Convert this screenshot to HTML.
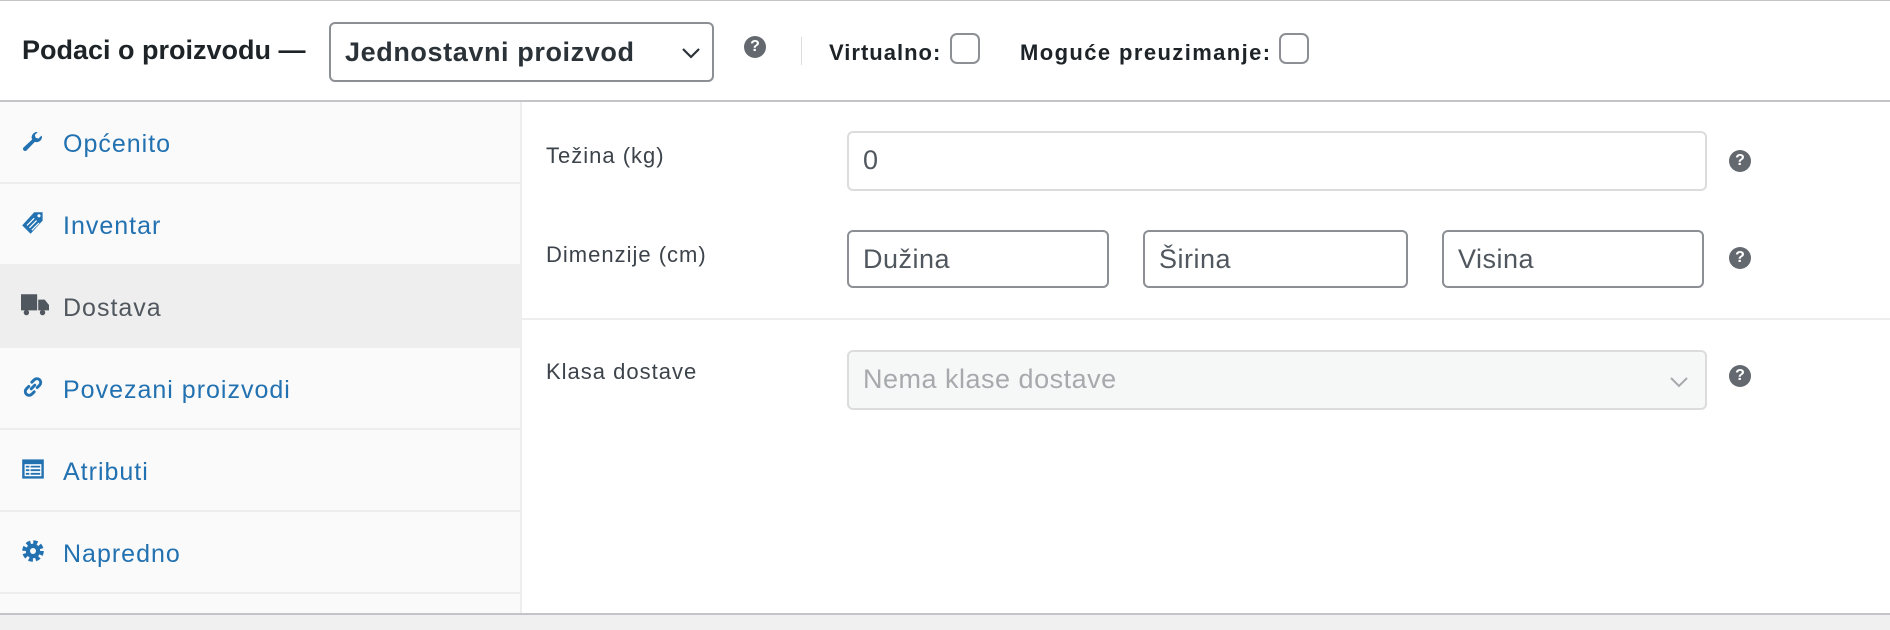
<!DOCTYPE html>
<html><head><meta charset="utf-8"><style>
*{box-sizing:border-box;margin:0;padding:0}
body{width:1890px;height:630px;background:#f0f0f1;font-family:"Liberation Sans",sans-serif;position:relative;overflow:hidden}
.a{position:absolute}
.hdr{left:0;top:0;width:1890px;height:102px;background:#fff;border-top:1px solid #c3c4c7;border-bottom:2px solid #c3c4c7}
.main{left:0;top:102px;width:1890px;height:513px;background:#fff;border-bottom:2px solid #c3c4c7}
.side{left:0;top:0;width:522px;height:511px;background:#fafafa;border-right:2px solid #eee}
.item{position:absolute;left:0;width:520px;height:82px;border-bottom:2px solid #eee;color:#2271b1;font-size:25px;letter-spacing:1px}
.item span{position:absolute;left:63px;top:28px}
.item svg{position:absolute;left:21px;top:27px}
.lbl{font-size:22px;letter-spacing:1px;color:#3c434a;left:546px}
.inp{border:2px solid #8c8f94;border-radius:6px;background:#fff;font-size:27px;letter-spacing:.5px;color:#50575e;padding-left:14px;line-height:54px}
.q{width:22px;height:22px;border-radius:50%;background:#646970;color:#fff;font-size:16px;font-weight:bold;text-align:center;line-height:22px}
.cb{width:30px;height:31px;border:2px solid #8c8f94;border-radius:7px;background:#fff}
.hl{font-size:22px;font-weight:bold;letter-spacing:1px;color:#1d2327;top:39px}
</style></head><body>
<div class="a hdr">
 <div class="a" style="left:22px;top:34px;font-size:27px;letter-spacing:0;font-weight:bold;color:#1d2327">Podaci o proizvodu —</div>
 <div class="a" style="left:329px;top:21px;width:385px;height:60px;border:2px solid #8c8f94;border-radius:6px;">
  <div class="a" style="left:14px;top:13px;font-size:27px;letter-spacing:.6px;font-weight:bold;color:#2c3338">Jednostavni proizvod</div>
  <svg class="a" style="left:350px;top:22px" width="20" height="14" viewBox="0 0 20 14"><path d="M2 3l8 8 8-8" fill="none" stroke="#2c3338" stroke-width="2.2"/></svg>
 </div>
 <div class="a q" style="left:744px;top:35px">?</div>
 <div class="a" style="left:801px;top:36px;width:1px;height:28px;background:#dcdcde"></div>
 <div class="a hl" style="left:829px">Virtualno:</div>
 <div class="a cb" style="left:950px;top:32px"></div>
 <div class="a hl" style="left:1020px;letter-spacing:1.4px">Moguće preuzimanje:</div>
 <div class="a cb" style="left:1279px;top:32px"></div>
</div>
<div class="a main">
 <div class="a side">
  <div class="item" style="top:0"><svg width="24" height="24" viewBox="0 0 20 20"><path d="M17.5 6.5a4.5 4.5 0 0 1-6 4.2L4.5 18a1.8 1.8 0 0 1-2.5-2.5L9.3 8.8A4.5 4.5 0 0 1 14 2.5l-2.5 2.5.7 2.3 2.3.7L17 5.5z" fill="#2271b1"/></svg><span>Općenito</span></div>
  <div class="item" style="top:82px"><svg width="24" height="24" viewBox="0 0 20 20"><path d="M11 1h7v7L8 19 1 12z" fill="#2271b1"/><path d="M5 12l6-6M7 14l6-6M9 16l6-6" stroke="#fff" stroke-width="1"/><circle cx="15" cy="4" r="1.3" fill="#fff"/></svg><span>Inventar</span></div>
  <div class="item" style="top:164px;background:#eee;color:#50575e"><svg width="28" height="24" viewBox="0 0 26 22"><path d="M0 1h15v15H0zM16 6h6l4 5v5H16z" fill="#50575e"/><circle cx="5" cy="18" r="2.5" fill="#50575e"/><circle cx="20" cy="18" r="2.5" fill="#50575e"/></svg><span>Dostava</span></div>
  <div class="item" style="top:246px"><svg width="24" height="24" viewBox="0 0 20 20"><path d="M8.5 11.5l3-3M9 6l2-2a3 3 0 0 1 4.5 4.5l-2 2M11 14l-2 2a3 3 0 0 1-4.5-4.5l2-2" fill="none" stroke="#2271b1" stroke-width="2.4" stroke-linecap="round"/></svg><span>Povezani proizvodi</span></div>
  <div class="item" style="top:328px"><svg width="24" height="24" viewBox="0 0 20 20"><rect x="1" y="2" width="18" height="16" fill="#2271b1"/><rect x="3" y="6" width="14" height="10" fill="#fff"/><path d="M4 8h3M4 11h3M4 14h3M8 8h8M8 11h8M8 14h8" stroke="#2271b1" stroke-width="1.5"/></svg><span>Atributi</span></div>
  <div class="item" style="top:410px"><svg width="24" height="24" viewBox="0 0 20 20"><circle cx="10" cy="10" r="7" fill="none" stroke="#2271b1" stroke-width="4" stroke-dasharray="3.3 2.2"/><circle cx="10" cy="10" r="6" fill="#2271b1"/><circle cx="10" cy="10" r="2.5" fill="#fafafa"/></svg><span>Napredno</span></div>
 </div>
 <div class="a lbl" style="top:41px">Težina (kg)</div>
 <div class="a inp" style="left:847px;top:29px;width:860px;height:60px;border-color:#dcdcde">0</div>
 <div class="a q" style="left:1729px;top:48px">?</div>
 <div class="a lbl" style="top:140px">Dimenzije (cm)</div>
 <div class="a inp" style="left:847px;top:128px;width:262px;height:58px">Dužina</div>
 <div class="a inp" style="left:1143px;top:128px;width:265px;height:58px">Širina</div>
 <div class="a inp" style="left:1442px;top:128px;width:262px;height:58px">Visina</div>
 <div class="a q" style="left:1729px;top:145px">?</div>
 <div class="a" style="left:522px;top:216px;width:1368px;height:2px;background:#eee"></div>
 <div class="a lbl" style="top:257px">Klasa dostave</div>
 <div class="a inp" style="left:847px;top:248px;width:860px;height:60px;border-color:#dcdcde;background:#f6f7f7;color:#a7aaad">Nema klase dostave
  <svg class="a" style="left:820px;top:24px" width="20" height="12" viewBox="0 0 20 12"><path d="M2 2l8 8 8-8" fill="none" stroke="#a7aaad" stroke-width="2"/></svg></div>
 <div class="a q" style="left:1729px;top:263px">?</div>
</div>
</body></html>
